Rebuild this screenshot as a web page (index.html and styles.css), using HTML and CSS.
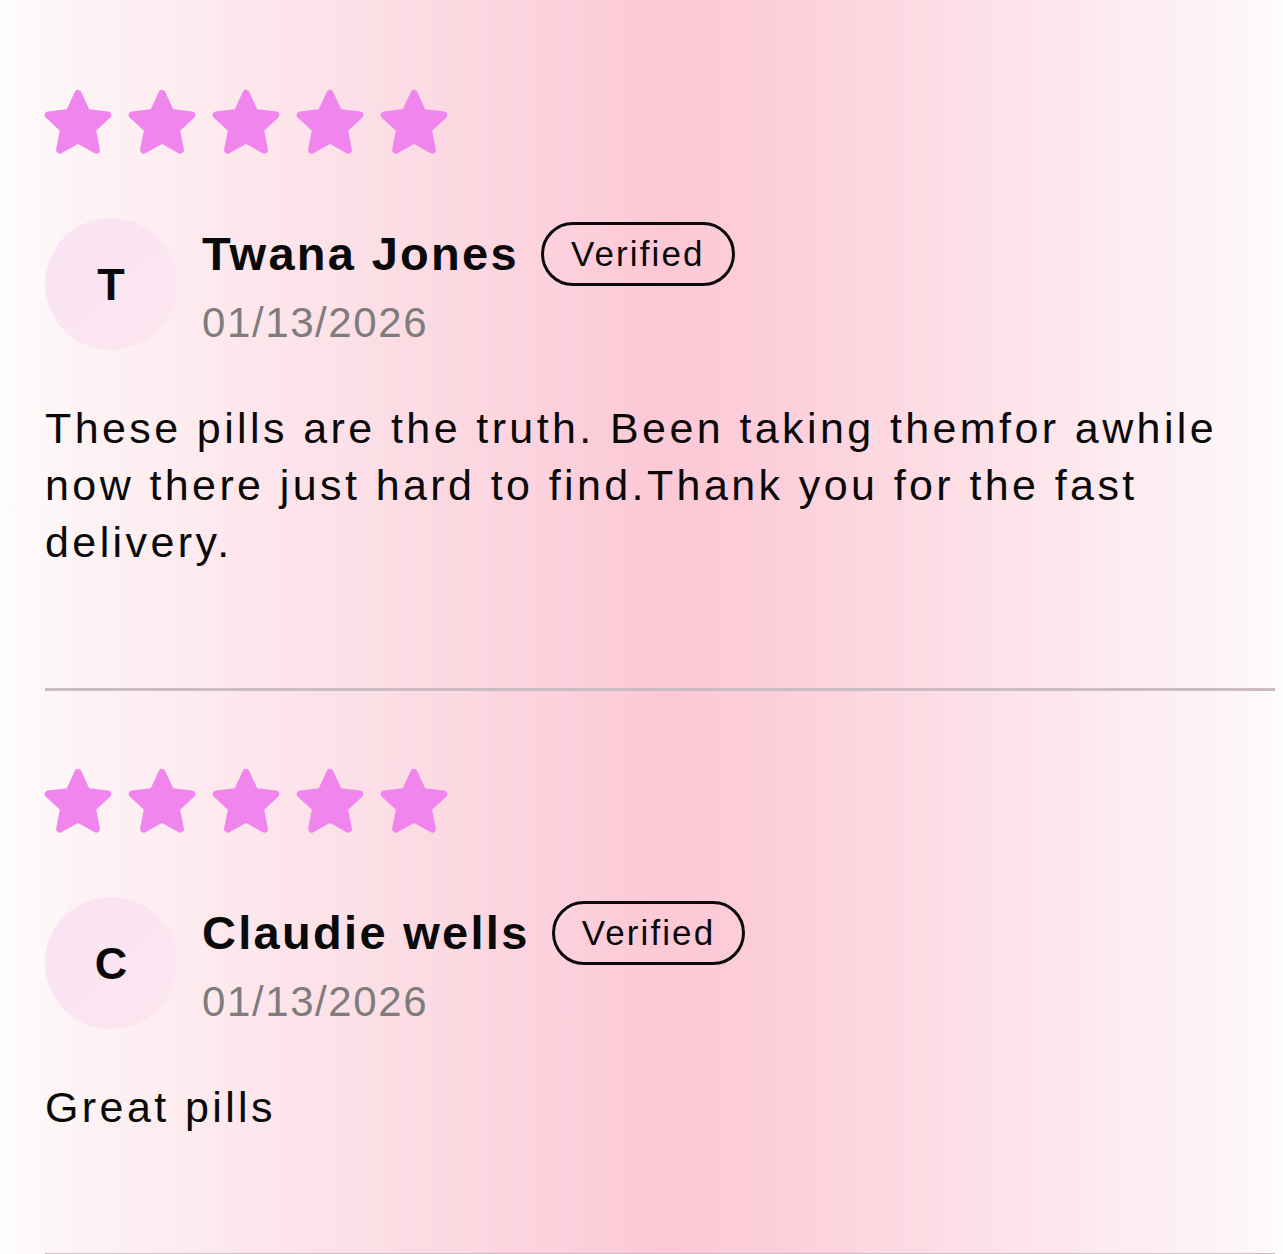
FILE: index.html
```html
<!DOCTYPE html>
<html lang="en">
<head>
<meta charset="utf-8">
<title>Reviews</title>
<link rel="stylesheet" href="styles.css">
</head>
<body>
<main class="reviews">
  <article class="review">
    <div class="stars" aria-label="5 stars">
      <svg class="star" viewBox="0 0 24 24"><polygon points="12,2.2 14.94,8.56 21.89,9.39 16.76,14.15 18.11,21.01 12,17.6 5.89,21.01 7.24,14.15 2.11,9.39 9.06,8.56"/></svg>
      <svg class="star" viewBox="0 0 24 24"><polygon points="12,2.2 14.94,8.56 21.89,9.39 16.76,14.15 18.11,21.01 12,17.6 5.89,21.01 7.24,14.15 2.11,9.39 9.06,8.56"/></svg>
      <svg class="star" viewBox="0 0 24 24"><polygon points="12,2.2 14.94,8.56 21.89,9.39 16.76,14.15 18.11,21.01 12,17.6 5.89,21.01 7.24,14.15 2.11,9.39 9.06,8.56"/></svg>
      <svg class="star" viewBox="0 0 24 24"><polygon points="12,2.2 14.94,8.56 21.89,9.39 16.76,14.15 18.11,21.01 12,17.6 5.89,21.01 7.24,14.15 2.11,9.39 9.06,8.56"/></svg>
      <svg class="star" viewBox="0 0 24 24"><polygon points="12,2.2 14.94,8.56 21.89,9.39 16.76,14.15 18.11,21.01 12,17.6 5.89,21.01 7.24,14.15 2.11,9.39 9.06,8.56"/></svg>
    </div>
    <div class="head">
      <div class="avatar">T</div>
      <div class="meta">
        <div class="name-row">
          <span class="name">Twana Jones</span>
          <span class="badge">Verified</span>
        </div>
        <div class="date">01/13/2026</div>
      </div>
    </div>
    <p class="text">These pills are the truth. Been taking themfor awhile now there just hard to find.Thank you for the fast delivery.</p>
  </article>
  <article class="review">
    <div class="stars" aria-label="5 stars">
      <svg class="star" viewBox="0 0 24 24"><polygon points="12,2.2 14.94,8.56 21.89,9.39 16.76,14.15 18.11,21.01 12,17.6 5.89,21.01 7.24,14.15 2.11,9.39 9.06,8.56"/></svg>
      <svg class="star" viewBox="0 0 24 24"><polygon points="12,2.2 14.94,8.56 21.89,9.39 16.76,14.15 18.11,21.01 12,17.6 5.89,21.01 7.24,14.15 2.11,9.39 9.06,8.56"/></svg>
      <svg class="star" viewBox="0 0 24 24"><polygon points="12,2.2 14.94,8.56 21.89,9.39 16.76,14.15 18.11,21.01 12,17.6 5.89,21.01 7.24,14.15 2.11,9.39 9.06,8.56"/></svg>
      <svg class="star" viewBox="0 0 24 24"><polygon points="12,2.2 14.94,8.56 21.89,9.39 16.76,14.15 18.11,21.01 12,17.6 5.89,21.01 7.24,14.15 2.11,9.39 9.06,8.56"/></svg>
      <svg class="star" viewBox="0 0 24 24"><polygon points="12,2.2 14.94,8.56 21.89,9.39 16.76,14.15 18.11,21.01 12,17.6 5.89,21.01 7.24,14.15 2.11,9.39 9.06,8.56"/></svg>
    </div>
    <div class="head">
      <div class="avatar">C</div>
      <div class="meta">
        <div class="name-row">
          <span class="name">Claudie wells</span>
          <span class="badge">Verified</span>
        </div>
        <div class="date">01/13/2026</div>
      </div>
    </div>
    <p class="text">Great pills</p>
  </article>
</main>
</body>
</html>
```

FILE: styles.css
```css
html, body {
  margin: 0;
  padding: 0;
}

body {
  min-height: 1254px;
  font-family: "Liberation Sans", Arial, sans-serif;
  color: #0a0a0a;
  background: linear-gradient(90deg,
    #fefcfc 0%,
    #fdf3f5 6%,
    #fde8ed 18%,
    #fcdce4 32%,
    #fcd0dc 44%,
    #fcc8d6 52%,
    #fccfdb 61%,
    #fdddE5 73%,
    #fdeaef 86%,
    #fdf5f8 96%,
    #fefcfd 100%);
}

.reviews {
  padding: 12px 8px 0 45px;
}

.review {
  padding: 75px 0 117px;
  border-bottom: 3px solid #cabcc0;
}

.stars {
  display: flex;
  gap: 12px;
  margin-left: -3px;
}

.star {
  width: 72px;
  height: 72px;
  display: block;
}

.star polygon {
  fill: #f185ee;
  stroke: #f185ee;
  stroke-width: 2.4;
  stroke-linejoin: round;
}

.head {
  display: flex;
  align-items: flex-start;
  gap: 25px;
  margin-top: 59px;
}

.avatar {
  width: 132px;
  height: 132px;
  flex: none;
  border-radius: 50%;
  background: linear-gradient(135deg, #fae3f3 0%, #fbe6ef 100%);
  display: flex;
  align-items: center;
  justify-content: center;
  font-weight: 700;
  font-size: 45px;
  line-height: 1;
}

.meta {
  padding-top: 4px;
}

.name-row {
  display: flex;
  align-items: center;
  gap: 22px;
  height: 64px;
}

.name {
  font-weight: 700;
  font-size: 47px;
  letter-spacing: 2.3px;
  line-height: 64px;
}

.badge {
  height: 58px;
  box-sizing: content-box;
  padding: 0 27px;
  border: 3px solid #0a0a0a;
  border-radius: 40px;
  font-size: 35px;
  letter-spacing: 2.1px;
  line-height: 58px;
}

.date {
  margin-top: 11px;
  font-size: 42px;
  line-height: 52px;
  letter-spacing: 1.6px;
  color: #7f7c7d;
}

.text {
  margin: 50px 0 0;
  font-size: 43px;
  line-height: 57px;
  letter-spacing: 3.4px;
}
```
